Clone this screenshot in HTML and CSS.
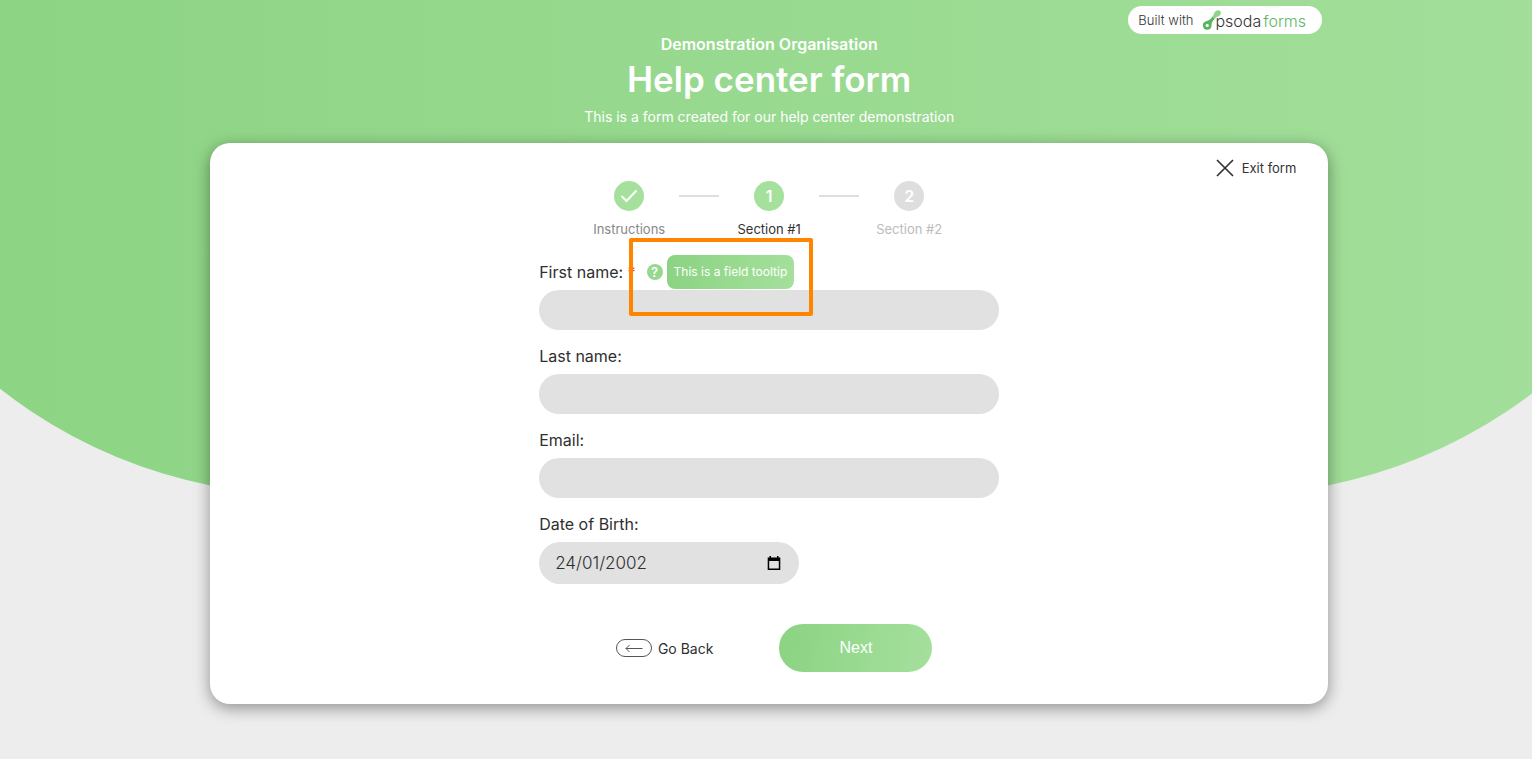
FILE: index.html
```html
<!DOCTYPE html>
<html lang="en">
<head>
<meta charset="utf-8">
<title>Help center form</title>
<link rel="stylesheet" href="styles.css">
</head>
<body>
<div class="backdrop"><div class="bowl"></div></div>
<div class="page">
  <header class="header">
    <a class="badge" href="#">
      <span>Built with</span>
      <svg class="badge-mark" width="20" height="22" viewBox="0 0 20 22" aria-hidden="true">
        <path d="M12.500 3.600C13.400 1.500 15.800.6 17.500 1.500c1.700 1 1.900 3.300.5 4.700-1.200 1.200-2.900 1.300-4.300 2.500L9 13.500l-2-1.800C9.500 9.500 11.500 6.500 12.500 3.600z" fill="#8ed48a"/>
        <path d="M10.500 8l2 1.800c-2 2-2.700 3.600-3 6.200a4.300 4.300 0 1 1-5.300-3.800C6.800 11.500 8.700 10.500 10.500 8z" fill="#58b55c"/>
        <circle cx="5.200" cy="16.400" r="1.600" fill="#fff"/>
      </svg>
      <span class="brand"><span class="brand-dark">psoda</span><span class="brand-green">forms</span></span>
    </a>
    <p class="organisation">Demonstration Organisation</p>
    <h1 class="title">Help center form</h1>
    <p class="subtitle">This is a form created for our help center demonstration</p>
  </header>

  <main class="card">
    <a class="exit" href="#">
      <svg width="18" height="18" viewBox="0 0 18 18" aria-hidden="true"><path d="M1 1l16 16M17 1L1 17" stroke="#333" stroke-width="1.700" fill="none"/></svg>
      <span>Exit form</span>
    </a>
    <ol class="steps">
      <li class="step done">
        <span class="dot"><svg width="18" height="14" viewBox="0 0 18 14" aria-label="Completed"><path d="M1.500 7l5 5L16.500 1.500" stroke="#fff" stroke-width="2" fill="none"/></svg></span>
        <span>Instructions</span>
      </li>
      <li class="line"></li>
      <li class="step current"><span class="dot">1</span><span>Section #1</span></li>
      <li class="line"></li>
      <li class="step"><span class="dot">2</span><span>Section #2</span></li>
    </ol>

    <form class="form">
      <div class="field">
        <div class="label-row">
          <label for="first">First name: <span class="required">*</span></label>
          <button class="help" type="button" aria-describedby="tip">?</button>
          <span class="tooltip" id="tip" role="tooltip">This is a field tooltip</span>
          <div class="highlight"></div>
        </div>
        <input class="input" id="first" type="text">
      </div>
      <div class="field">
        <div class="label-row"><label for="last">Last name:</label></div>
        <input class="input" id="last" type="text">
      </div>
      <div class="field">
        <div class="label-row"><label for="email">Email:</label></div>
        <input class="input" id="email" type="email">
      </div>
      <div class="field">
        <div class="label-row"><label for="birth">Date of Birth:</label></div>
        <div class="date">
          <input class="date-input" id="birth" type="text" value="24/01/2002">
          <button class="calendar" type="button" aria-label="Open calendar">
            <svg width="14" height="15" viewBox="0 0 14 15" aria-hidden="true"><path d="M2.500 0h1.500v1.500h6V0h1.500v1.500H13.300V14H.700V1.500H2.500zM2.200 5v7.500h9.600V5z" fill="#000" fill-rule="evenodd"/></svg>
          </button>
        </div>
      </div>
      <div class="actions">
        <button class="back" type="button">
          <svg width="36" height="18" viewBox="0 0 36 18" aria-hidden="true" fill="none" stroke="#555"><rect x=".5" y=".5" width="35" height="17" rx="8.500"/><path d="M26.500 9.500H10M13.500 6L10 9.500l3.500 3.500"/></svg>
          <span>Go Back</span>
        </button>
        <button class="next" type="submit">Next</button>
      </div>
    </form>
  </main>
</div>
</body>
</html>
```
FILE: styles.css
```css
* { box-sizing: border-box; }

html { background: #ededed; }

body {
  margin: 0;
  font-family: Inter, "Open Sans", sans-serif;
  color: #2f2f2f;
}

button, input { font: inherit; color: inherit; }

.backdrop {
  position: absolute;
  inset: 0;
  z-index: -1;
  overflow: hidden;
}

.bowl {
  width: 1922px;
  height: 595px;
  margin-top: -100px;
  margin-left: calc(50% - 958px);
  border-radius: 0 0 500px 500px;
  background: linear-gradient(90deg, #8bd382, #a5e09d);
}

.page {
  width: 73%;
  margin-left: 210px;
  padding-bottom: 55px;
}

.header {
  display: flex;
  flex-direction: column;
  align-items: center;
  padding-top: 6px;
  color: #fff;
}

.badge {
  display: flex;
  align-items: center;
  align-self: flex-end;
  width: 194px;
  height: 28px;
  margin-right: 6px;
  padding-left: 10px;
  border-radius: 14px;
  background: #fff;
  color: #333;
  font-size: 13px;
  font-weight: 300;
  text-decoration: none;
}

.badge-mark { margin-left: 9px; }

.brand {
  display: flex;
  gap: 2px;
  margin-left: -7px;
  padding-top: 2px;
  font-size: 16px;
}

.brand-dark { color: #333; }
.brand-green { color: #5cb860; }

.organisation, .title, .subtitle { margin: 0; }
.organisation { font-size: 16px; font-weight: 600; line-height: 20px; }
.title { font-size: 35px; font-weight: 600; line-height: 51px; }
.subtitle { font-size: 14px; line-height: 24px; }

.card {
  position: relative;
  margin-top: 14px;
  padding: 38px 0 32px;
  border-radius: 20px;
  background: #fff;
  box-shadow: 0 4px 16px rgba(0, 0, 0, 0.4);
}

.exit {
  position: absolute;
  top: 16px;
  right: 32px;
  display: flex;
  align-items: center;
  gap: 8px;
  color: #333;
  font-size: 13px;
  line-height: 18px;
  text-decoration: none;
}

.steps {
  display: flex;
  justify-content: center;
  margin: 0;
  padding: 0;
  list-style: none;
}

.step {
  display: flex;
  flex-direction: column;
  align-items: center;
  gap: 8px;
  width: 100px;
  color: #bbb;
  font-size: 13px;
  line-height: 20px;
}

.step.done { color: #888; }
.step.current { color: #333; }

.dot {
  display: flex;
  align-items: center;
  justify-content: center;
  width: 30px;
  height: 30px;
  border-radius: 50%;
  background: #dedede;
  color: #fff;
  font-size: 16px;
  font-weight: 600;
}

.done .dot, .current .dot { background: #a5e09d; }

.line {
  width: 40px;
  height: 2px;
  margin-top: 14px;
  background: #dedede;
}

.form {
  width: 460px;
  margin: 15px auto 0;
}

.field { margin-bottom: 8px; }

.label-row {
  position: relative;
  display: flex;
  align-items: center;
  height: 36px;
  font-size: 16px;
}

.required { color: #e03030; }

.help {
  width: 16px;
  height: 16px;
  margin-left: 11px;
  padding: 0;
  border: 0;
  border-radius: 50%;
  background: #96d88e;
  color: #fff;
  font-size: 13px;
  font-weight: 600;
  line-height: 16px;
}

.tooltip {
  margin-left: 4px;
  padding: 0 7px;
  border-radius: 8px;
  background: linear-gradient(100deg, #8bd382, #a5e09d);
  color: #fff;
  font-size: 12px;
  line-height: 34px;
}

.highlight {
  position: absolute;
  top: -16px;
  left: 90px;
  width: 184px;
  height: 78px;
  border: 4px solid #ff8400;
  border-radius: 2px;
  pointer-events: none;
}

.input {
  display: block;
  width: 100%;
  height: 40px;
  padding: 0 16px;
  border: 0;
  border-radius: 20px;
  background: #e1e1e1;
}

.date {
  display: flex;
  align-items: center;
  width: 260px;
  height: 42px;
  padding: 0 18px 0 16px;
  border-radius: 21px;
  background: #e1e1e1;
}

.date-input {
  flex: 1;
  min-width: 0;
  padding: 0;
  border: 0;
  background: none;
  font-size: 17px;
  font-weight: 300;
}

.calendar {
  display: flex;
  padding: 0;
  border: 0;
  background: none;
}

.actions {
  display: flex;
  align-items: center;
  justify-content: center;
  gap: 66px;
  margin-top: 40px;
  padding-left: 10px;
}

.back {
  display: flex;
  align-items: center;
  gap: 6px;
  padding: 0;
  border: 0;
  background: none;
  font-size: 14px;
}

.next {
  width: 153px;
  height: 48px;
  border: 0;
  border-radius: 24px;
  background: linear-gradient(100deg, #8bd382, #a5e09d);
  color: #fff;
  font-family: "Liberation Sans", Arial, sans-serif;
  font-size: 16px;
}
```
